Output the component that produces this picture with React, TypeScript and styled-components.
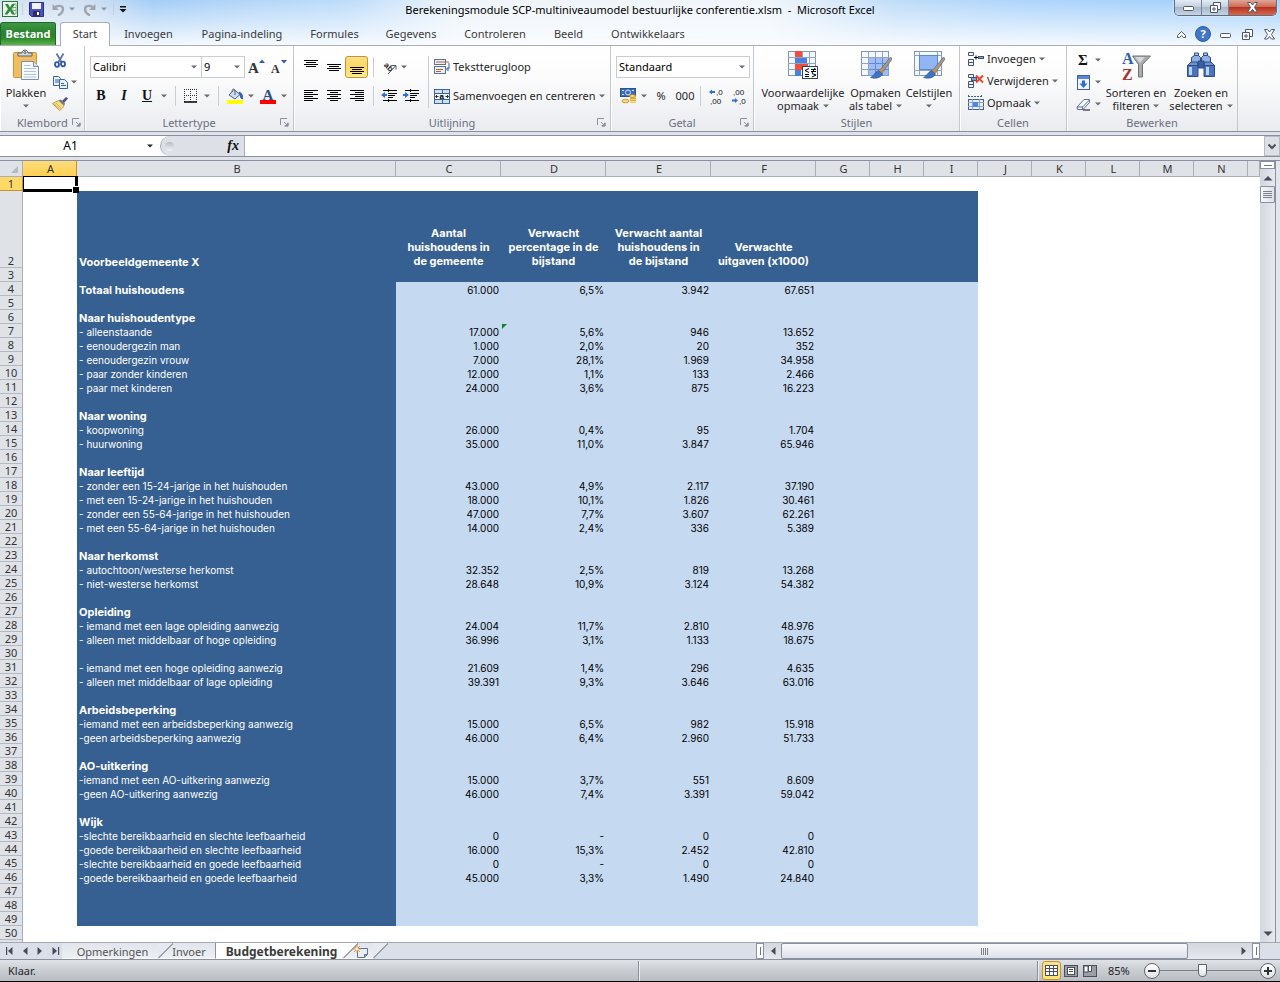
import React from "react";
import styled, { createGlobalStyle, css } from "styled-components";

const ui = `"Noto Sans", "Open Sans", sans-serif`;
const line = "#8b90a0";
const navy = "#366092";
const pale = "#c5d9f1";

const Global = createGlobalStyle`
  * { box-sizing: border-box; }
  body { margin: 0; background: #000; color: #262626; font: 11px/14px ${ui}; }
  button, input, select { font: inherit; color: inherit; margin: 0; }
  button { padding: 0; border: 0; background: none; display: flex; align-items: center; justify-content: center; }
  svg { display: block; flex: none; }
`;

const Window = styled.div`
  display: flex;
  flex-direction: column;
  height: 100vh;
  min-height: 400px;
  overflow: hidden;
  border-bottom: 1px solid #000;
  background: #dfe3e8;
`;

/* Title bar and ribbon tabs */
const Chrome = styled.header`
  flex: none;
  background:
    linear-gradient(to bottom, rgba(255, 255, 255, 0) 0%, rgba(250, 252, 255, 0.95) 100%),
    linear-gradient(to right, #d3e2f1 0%, #cfe0f2 7%, #a3cdf6 12%, #b4d6f8 20%, #bddcfa 27%, #eef4fa 36%, #f1f6fb 60%, #bfdcf8 70%, #aed5fb 80%, #a0cef9 100%);
`;
const TitleBar = styled.div`
  display: grid;
  grid-template-columns: 1fr auto 1fr;
  height: 22px;
`;
const QuickAccess = styled.div`
  display: flex;
  align-items: center;
  height: 18px;
`;
const Title = styled.h1`
  margin: 0;
  padding-top: 3px;
  font-size: 11px;
  font-weight: 400;
  line-height: 14px;
  color: #000;
  white-space: pre;
`;
const WindowButtons = styled.div`
  display: flex;
  justify-self: end;
  height: 16px;
  margin-right: 3px;
  border: 1px solid #5f6c7c;
  border-top: 0;
  border-radius: 0 0 5px 5px;
  overflow: hidden;
  box-shadow: 0 0 2px #fff;
`;
const WindowButton = styled.button<{ $w: number; $close?: boolean }>`
  width: ${(p) => p.$w}px;
  border-right: ${(p) => (p.$close ? 0 : "1px solid #75849a")};
  background: ${(p) =>
    p.$close
      ? "linear-gradient(#e0a597, #cf6a55 45%, #b63420 50%, #d6694f)"
      : "linear-gradient(#e4ecf5, #c3d0df 45%, #a9b9cb 50%, #c5d4e4)"};
`;
const TabBar = styled.nav`
  display: flex;
  align-items: flex-end;
  height: 24px;
  border-bottom: 1px solid #a9aeb7;
`;
const FileTab = styled.button`
  width: 56px;
  height: 23px;
  margin-right: 4px;
  border: 1px solid #1c6a2b;
  border-bottom: 0;
  border-radius: 3px 3px 0 0;
  background: linear-gradient(#3f9744, #28802f 50%, #2f8a2e 70%, #5cb546);
  color: #fff;
  font-weight: 700;
`;
const Tab = styled.button<{ $w: number; $active?: boolean }>`
  width: ${(p) => p.$w}px;
  height: 23px;
  color: #3b3b3b;
  ${(p) =>
    p.$active &&
    css`
      margin-bottom: -1px;
      height: 24px;
      padding-bottom: 2px;
      border: 1px solid #a9aeb7;
      border-bottom: 0;
      border-radius: 3px 3px 0 0;
      background: #fff;
    `}
`;
const TabTools = styled.div`
  display: flex;
  margin-left: auto;
`;

/* Ribbon */
const Ribbon = styled.section`
  display: flex;
  flex: none;
  height: 86px;
  border-bottom: 1px solid ${line};
  background: linear-gradient(#fff, #fbfbfc 40%, #e9ebef 100%);
`;
const GroupBox = styled.div<{ $w: number }>`
  display: flex;
  flex-direction: column;
  flex: none;
  width: ${(p) => p.$w}px;
  border-right: 1px solid #c3c7ce;
  box-shadow: inset 1px 0 0 #fff;
`;
const GroupBody = styled.div<{ $top: number; $left: number }>`
  display: flex;
  align-items: flex-start;
  height: 69px;
  padding: ${(p) => p.$top}px 0 0 ${(p) => p.$left}px;
`;
const GroupLabel = styled.div`
  display: grid;
  grid-template-columns: 17px 1fr 17px;
  align-items: center;
  height: 15px;
  text-align: center;
  color: #6a6f80;
  span { grid-column: 2; }
`;
const Stack = styled.div<{ $gap?: number }>`
  display: flex;
  flex-direction: column;
  gap: ${(p) => p.$gap ?? 0}px;
`;
const Row = styled.div`
  display: flex;
  align-items: center;
  height: 22px;
`;
const Tool = styled.button<{ $w: number; $on?: boolean }>`
  width: ${(p) => p.$w}px;
  height: 22px;
  ${(p) =>
    p.$on &&
    css`
      border: 1px solid #c29233;
      border-radius: 3px;
      background: linear-gradient(#fce08a, #ffd75e 50%, #ffee96);
    `}
`;
const LabelTool = styled.button`
  height: 22px;
  gap: 3px;
  white-space: nowrap;
  justify-content: flex-start;
`;
const Gap = styled.span<{ $w: number; $h?: number }>`
  width: ${(p) => p.$w}px;
  height: ${(p) => p.$h ?? 20}px;
  background: linear-gradient(#c9cdd6, #c9cdd6) center / 1px 100% no-repeat;
`;
const BigTool = styled.button<{ $w: number }>`
  flex-direction: column;
  justify-content: flex-start;
  width: ${(p) => p.$w}px;
  height: 64px;
  line-height: 13px;
  white-space: nowrap;
  svg:first-child { margin-bottom: 5px; }
  span { display: flex; align-items: center; gap: 4px; min-height: 13px; }
  span svg:first-child { margin-bottom: 0; }
`;
const Pick = styled.label<{ $w: number }>`
  position: relative;
  display: block;
  width: ${(p) => p.$w}px;
  height: 22px;
  border: 1px solid #c9ccd2;
  & + & { border-left: 0; }
  select {
    width: 100%;
    height: 20px;
    padding: 0 14px 0 2px;
    border: 0;
    background: #fff;
    color: #000;
    appearance: none;
  }
  svg { position: absolute; right: 4px; top: 8px; pointer-events: none; }
`;
const Glyph = styled.span<{ $size: number; $bold?: boolean; $italic?: boolean; $under?: boolean }>`
  font-family: "Liberation Serif", serif;
  font-size: ${(p) => p.$size}px;
  font-weight: ${(p) => (p.$bold ? 700 : 400)};
  font-style: ${(p) => (p.$italic ? "italic" : "normal")};
  text-decoration: ${(p) => (p.$under ? "underline" : "none")};
  color: #111;
`;

/* Formula bar */
const FormulaBar = styled.section`
  display: flex;
  flex: none;
  height: 22px;
  margin: 3px 0;
  border: 1px solid ${line};
  border-width: 1px 0;
  background: #fff;
`;
const NameBox = styled.label`
  display: flex;
  align-items: center;
  width: 160px;
  padding-right: 7px;
  input { flex: 1; min-width: 0; padding: 0 6px 0 0; border: 0; text-align: center; font-size: 12px; color: #000; background: none; }
`;
const FxBox = styled.div`
  display: flex;
  align-items: center;
  justify-content: space-between;
  width: 85px;
  padding: 0 5px 0 4px;
  border: 1px solid #a7acb6;
  border-width: 0 1px;
  border-radius: 11px 0 0 11px;
  background: #dde0e6;
`;
const Dot = styled.span`
  width: 9px;
  height: 9px;
  border-radius: 50%;
  background: linear-gradient(#b7bbc2, #f4f5f7);
`;
const FormulaInput = styled.input`
  flex: 1;
  min-width: 0;
  border: 0;
`;
const Expand = styled.button`
  width: 16px;
  border: 1px solid #b7bbc4;
  background: #dde0e6;
`;

/* Sheet */
const SheetArea = styled.main`
  display: flex;
  flex: 1;
  min-height: 0;
  border-top: 1px solid ${line};
`;
const GridPane = styled.div`
  flex: 1;
  min-width: 0;
  overflow: hidden;
  background: #fff;
`;
const Grid = styled.table`
  width: 100%;
  table-layout: fixed;
  border-collapse: separate;
  border-spacing: 0;
  line-height: 12px;
  th, td { padding: 0; height: 14px; }
`;
const ColHead = styled.th<{ $on?: boolean }>`
  && { height: 16px; padding: 1px 0 0 2px; }
  border-right: 1px solid ${(p) => (p.$on ? "#c29233" : "#a9aeb7")};
  border-bottom: 1px solid ${(p) => (p.$on ? "#c29233" : "#a9aeb7")};
  background: ${(p) => (p.$on ? "linear-gradient(#fddc7a, #ffd052)" : "#dfe2e7")};
  font-weight: 400;
  color: #333;
`;
const RowHead = styled.th<{ $on?: boolean }>`
  && { padding-top: 1px; }
  border-right: 1px solid ${(p) => (p.$on ? "#c29233" : "#a9aeb7")};
  border-bottom: 1px solid ${(p) => (p.$on ? "#c29233" : "#b4b8c0")};
  background: ${(p) => (p.$on ? "#ffd967" : "#dfe2e7")};
  font-weight: 400;
  color: #333;
  vertical-align: bottom;
`;
const SizedRow = styled.tr<{ $h: number }>`
  && > * { height: ${(p) => p.$h}px; }
`;
const Cell = styled.td<{ $fill?: string }>`
  background: ${(p) => p.$fill ?? "#fff"};
`;
const Label = styled.td<{ $bold?: boolean }>`
  && { padding: 2px 0 0 2px; }
  background: ${navy};
  color: #fff;
  font-family: Inter, sans-serif;
  font-size: ${(p) => (p.$bold ? 11 : 10)}px;
  font-weight: ${(p) => (p.$bold ? 700 : 400)};
  vertical-align: bottom;
  white-space: nowrap;
`;
const Heading = styled(Label)`
  && { padding: 0; }
  line-height: 14px;
  text-align: center;
`;
const Num = styled.td`
  && { padding: 2px 2px 0 0; }
  position: relative;
  background: ${pale};
  color: #000;
  font-family: Inter, sans-serif;
  font-size: 10px;
  text-align: right;
`;
const ErrorMark = styled.span`
  position: absolute;
  left: 1px;
  top: 0;
  border-top: 5px solid #0a8a1e;
  border-right: 5px solid transparent;
`;
const ActiveCell = styled.td`
  position: relative;
  z-index: 1;
  &::before {
    content: "";
    position: absolute;
    inset: -1px -1px -1px 0;
    border: 1px solid #000;
    border-width: 1px 3px 3px 1px;
  }
  &::after {
    content: "";
    position: absolute;
    right: -2px;
    bottom: -2px;
    width: 6px;
    height: 6px;
    border: 1px solid #fff;
    border-width: 1px 0 0 1px;
    background: #000;
  }
`;
const VScroll = styled.div`
  display: flex;
  flex-direction: column;
  width: 16px;
  background: linear-gradient(to right, #d3d7de, #e6e9ee);
  border-right: 1px solid ${line};
`;
const SplitBox = styled.span<{ $v?: boolean }>`
  flex: none;
  display: block;
  width: ${(p) => (p.$v ? 8 : 15)}px;
  height: ${(p) => (p.$v ? 16 : 8)}px;
  border: 1px solid ${line};
  background: ${(p) =>
    p.$v
      ? "linear-gradient(#6f7585, #6f7585) center / 1px 8px no-repeat #fff"
      : "linear-gradient(#6f7585, #6f7585) center / 8px 1px no-repeat #fff"};
`;
const ScrollArrow = styled.button<{ $v?: boolean }>`
  flex: none;
  width: ${(p) => (p.$v ? 15 : 17)}px;
  height: ${(p) => (p.$v ? 17 : 16)}px;
`;
const VThumb = styled.div`
  display: flex;
  align-items: center;
  justify-content: center;
  height: 17px;
  border: 1px solid #8b90a0;
  border-radius: 1px;
  background: linear-gradient(to right, #f7f8fa, #dde1e7);
`;
const Spacer = styled.div`
  flex: 1;
`;
const Frame = styled.div`
  width: 4px;
  background: #e3e7ed;
`;

/* Sheet tabs */
const SheetBar = styled.nav`
  display: flex;
  flex: none;
  height: 17px;
  border-top: 1px solid #a3a8b3;
  background: #dbe0e8;
`;
const SheetNav = styled.div`
  display: flex;
  width: 62px;
  padding-left: 2px;
`;
const SheetNavButton = styled.button`
  width: 15px;
`;
const SheetTab = styled.button<{ $w: number; $z: number; $on?: boolean }>`
  position: relative;
  width: ${(p) => p.$w}px;
  height: 16px;
  padding: 2px 0 0 4px;
  z-index: ${(p) => p.$z};
  border-left: 1px solid ${(p) => (p.$on ? line : "transparent")};
  background: ${(p) => (p.$on ? "#fff" : "linear-gradient(#e2e6ec, #eceff3)")};
  color: ${(p) => (p.$on ? "#3b3b3b" : "#555")};
  font-size: ${(p) => (p.$on ? 12 : 11)}px;
  font-weight: ${(p) => (p.$on ? 700 : 400)};
  border-bottom: 1px solid #fff;
  &::after {
    content: "";
    position: absolute;
    left: 100%;
    top: 0;
    width: 15px;
    height: 15px;
    background: linear-gradient(135deg, ${(p) => (p.$on ? "#fff" : "#e6e9ee")} 47%, #9a9fac 47% 54%, transparent 54%);
  }
`;
const HScroll = styled.div`
  display: flex;
  width: calc(40% - 8px);
  background: linear-gradient(#d3d7de, #e6e9ee);
`;
const HThumb = styled.div`
  display: flex;
  align-items: center;
  justify-content: center;
  flex: 1;
  margin-right: 47px;
  border: 1px solid #8b90a0;
  border-radius: 2px;
  background: linear-gradient(#f7f9fb, #dde1e7);
`;

/* Status bar */
const StatusBar = styled.footer`
  display: flex;
  align-items: center;
  flex: none;
  height: 22px;
  border-top: 1px solid ${line};
  background: linear-gradient(#dfe2e6, #cdd0d5 40%, #b9bcc2);
`;
const StatusText = styled.span`
  flex: 0 0 calc(50% - 2px);
  padding-left: 8px;
`;
const StatusTail = styled.div`
  display: flex;
  align-items: center;
  flex: 1;
  height: 20px;
  border-left: 1px solid #8b90a0;
  box-shadow: inset 1px 0 0 #eceef1;
`;
const ViewTools = styled.div`
  display: flex;
  align-items: center;
  margin-left: auto;
  height: 20px;
  padding-left: 4px;
  border-left: 1px solid #8b90a0;
  box-shadow: inset 1px 0 0 #eceef1;
`;
const ViewButton = styled.button<{ $on?: boolean }>`
  width: 19px;
  height: 19px;
  ${(p) =>
    p.$on &&
    css`
      border: 1px solid #c29233;
      border-radius: 3px;
      background: linear-gradient(#fce08a, #ffe777);
    `}
`;
const Percent = styled.span`
  width: 45px;
  padding-left: 9px;
`;
const Round = styled.button`
  width: 16px;
  height: 16px;
  border: 1px solid #5f6470;
  border-radius: 50%;
  background: linear-gradient(#fff, #dfe1e5);
`;
const Zoom = styled.input`
  width: 100px;
  height: 16px;
  margin: 0;
  appearance: none;
  background: linear-gradient(#7b808b, #7b808b) center / 100% 1px no-repeat;
  &::-webkit-slider-thumb {
    appearance: none;
    width: 9px;
    height: 13px;
    border: 1px solid #5f6470;
    border-radius: 1px 1px 5px 5px;
    background: linear-gradient(#fff, #e3e5e9);
  }
`;

/* Icons */
const Caret = ({ color = "#6b6b6b" }: { color?: string }) => (
  <svg width="6" height="4" viewBox="0 0 6 4"><path d="M0 0.5h6L3 3.5z" fill={color} /></svg>
);
const Launcher = () => (
  <svg width="9" height="9" viewBox="0 0 9 9" fill="none" stroke="#8b90a0">
    <path d="M0.5 7V0.5H7M4 4l3 3M8 4.500V8H4.500" /><path d="M8 5v3H5z" fill="#8b90a0" />
  </svg>
);
const Lines = ({ rows }: { rows: [number, number, number][] }) => (
  <svg width="14" height="16" viewBox="0 0 14 16" stroke="#000">
    {rows.map(([y, a, b]) => <path key={y} d={`M${a} ${y + 0.5}H${b}`} />)}
  </svg>
);
const ExcelIcon = () => (
  <svg width="17" height="17" viewBox="0 0 17 17">
    <rect x="0.500" y="0.500" width="15" height="15" fill="#eef7ec" stroke="#237a35" />
    <path d="M11 3h3v10h-3zM11 6.500h3M11 9.500h3" fill="#fff" stroke="#5a9c5e" strokeWidth="0.800" />
    <path d="M3 3h3l2 3.500L10 3h3L9.500 8l3.500 5.500h-3L8 10l-2.500 3.500h-3L6 8z" fill="#2b8a3b" />
  </svg>
);
const SaveIcon = () => (
  <svg width="15" height="15" viewBox="0 0 15 15">
    <path d="M0.500 0.500h14v14h-12l-2-2z" fill="#4a50bd" stroke="#2b2f86" />
    <rect x="3" y="1" width="9" height="6" fill="#f0f4ff" /><rect x="4" y="9" width="7" height="5" fill="#2b2f5e" /><rect x="8" y="10" width="2" height="3" fill="#fff" />
  </svg>
);
const UndoIcon = ({ flip }: { flip?: boolean }) => (
  <svg width="13" height="13" viewBox="0 0 13 13">
    <g transform={flip ? "translate(13 0) scale(-1 1)" : undefined} fill="none" stroke="#a0a5ad" strokeWidth="2.400">
      <path d="M2 5c3-3 9-3 9 1 0 3-2 5-5 6.500" /><path d="M0.500 1v6h6.500z" fill="#a0a5ad" stroke="none" />
    </g>
  </svg>
);
const CustomizeIcon = () => (
  <svg width="8" height="7" viewBox="0 0 8 7"><path d="M1 0h6v1.500H1zM0.500 3h7L4 6.500z" fill="#111" /></svg>
);
const PasteIcon = () => (
  <svg width="28" height="32" viewBox="0 0 28 32">
    <rect x="1.500" y="3.500" width="23" height="25" rx="1" fill="#f0bd5f" stroke="#cf9437" />
    <path d="M6 7V4h4c0-4 6-4 6 0h4v3z" fill="#d6dade" stroke="#596069" /><circle cx="13" cy="3.500" r="1" fill="#fff" stroke="#596069" />
    <path d="M9.500 12.500h12l5 5v13h-17z" fill="#f6f9fd" stroke="#7d8fa8" /><path d="M21.500 12.500v5h5" fill="#d9e3ef" stroke="#7d8fa8" />
    <path d="M12 16.500h7M12 19.500h12M12 22.500h12M12 25.500h12M12 28h12" stroke="#b4c2d6" />
  </svg>
);
const CutIcon = () => (
  <svg width="12" height="15" viewBox="0 0 12 15" fill="none">
    <path d="M2.500 0.500L7.500 9M9.500 0.500L4.500 9" stroke="#62779a" strokeWidth="1.800" />
    <ellipse cx="3" cy="11.500" rx="2" ry="2.300" stroke="#2a56b5" strokeWidth="1.800" /><ellipse cx="9" cy="11" rx="2" ry="2.300" stroke="#2a56b5" strokeWidth="1.800" />
  </svg>
);
const CopyIcon = () => (
  <svg width="15" height="13" viewBox="0 0 15 13" fill="#eaf2fd" stroke="#3462ae">
    <path d="M0.500 0.500h5l2 2v7h-7z" /><path d="M2 4h4M2 6h4" /><path d="M6.500 3.500h5l3 3v6h-8z" /><path d="M8 7.500h3M8 9.500h5" />
  </svg>
);
const BrushIcon = () => (
  <svg width="16" height="14" viewBox="0 0 16 14">
    <path d="M14 0l2 1.500-4 4.500-2-2z" fill="#51499c" /><path d="M6.500 3.500l2.500-1 4 4-1 2.500z" fill="#6f7684" />
    <path d="M6.500 3.500L0.500 6.500l7 7c2-1 3.500-3 4.500-5z" fill="#f5dd83" stroke="#b28d36" strokeWidth="0.800" /><path d="M4 6l5 5M2.500 7.500l5 4" stroke="#c9a24a" strokeWidth="0.700" />
  </svg>
);
const GrowFont = ({ down }: { down?: boolean }) => (
  <svg width="18" height="20" viewBox="0 0 18 20">
    <text x="0" y="16" fontFamily="Liberation Serif" fontWeight="700" fontSize={down ? 12 : 15} fill="#333">A</text>
    <path d={down ? "M10 3h6l-3 3.500z" : "M11 6h6l-3-3.500z"} fill="#2f5cae" />
  </svg>
);
const BorderIcon = () => (
  <svg width="14" height="14" viewBox="0 0 14 14" fill="none" stroke="#333">
    <path d="M0.500 0v13M6.500 0v13M12.500 0v13M0 0.500h13M0 6.500h13" strokeDasharray="1 1" /><path d="M0 13h13" strokeWidth="1.500" stroke="#000" />
  </svg>
);
const FillIcon = () => (
  <svg width="16" height="16" viewBox="0 0 16 16">
    <path d="M7 1.500l6 5-5 4.500-6-4z" fill="#cfdcec" stroke="#4c6285" /><path d="M5 4c0-4 3-4 3 0v3" fill="none" stroke="#4c6285" /><path d="M12 4c3 1 4 4 3.500 7-2 0-2-3-2.500-4.500z" fill="#2c62b5" stroke="#2c62b5" />
    <rect y="12" width="16" height="4" fill="#ff0" />
  </svg>
);
const FontColorIcon = () => (
  <svg width="16" height="20" viewBox="0 0 16 20">
    <text x="2.500" y="13.500" fontFamily="Liberation Serif" fontWeight="700" fontSize="15" fill="#2b4f92">A</text><rect y="14" width="16" height="4" fill="#f00" />
  </svg>
);
const OrientIcon = () => (
  <svg width="16" height="16" viewBox="0 0 16 16">
    <text x="0" y="0" transform="translate(2.500 6.500) rotate(45)" fontFamily="Liberation Sans" fontWeight="700" fontSize="8" fill="#222">ab</text>
    <path d="M7 15l7.500-8M11 6.500h4v4" stroke="#555" fill="none" />
  </svg>
);
const IndentIcon = ({ out }: { out?: boolean }) => (
  <svg width="16" height="16" viewBox="0 0 16 16" stroke="#000">
    <path d="M2 2.500h14M7 5.500h9M7 7.500h7M7 9.500h5M2 12.500h14" /><path d="M7.500 1v14" strokeDasharray="1 1" />
    <path d={out ? "M0 7l4-3v2h2v2h-2v2z" : "M6 7L2 4v2H0v2h2v2z"} fill="#2f6fd0" stroke="none" />
  </svg>
);
const WrapIcon = () => (
  <svg width="16" height="16" viewBox="0 0 16 16" fill="#e9f0f9" stroke="#5b7394">
    <rect x="0.500" y="0.500" width="11" height="5" /><rect x="0.500" y="7.500" width="11" height="7" /><path d="M2 3h13" stroke="#b7622d" /><path d="M2 10.500h7M2 12.500h5" stroke="#b7622d" />
    <path d="M15 4v6h-2M14.500 8l-2 2 2 2" stroke="#3462ae" fill="none" />
  </svg>
);
const MergeIcon = () => (
  <svg width="16" height="15" viewBox="0 0 16 15" stroke="#3f6393">
    <rect x="0.500" y="0.500" width="15" height="14" fill="#cfe0f5" /><path d="M0 4.500h16M0 10.500h16M8.500 0v4M8.500 11v4" /><rect x="1" y="5" width="14" height="5" fill="#eef4fb" stroke="none" />
    <path d="M1.500 7.500h3M11.500 7.500h3M3 6l-1.500 1.500L3 9M13 6l1.500 1.500L13 9" stroke="#333" fill="none" /><text x="5.500" y="10" fontFamily="Liberation Sans" fontWeight="700" fontSize="8" fill="#000" stroke="none">a</text>
  </svg>
);
const MoneyIcon = () => (
  <svg width="17" height="16" viewBox="0 0 17 16">
    <rect x="0.500" y="0.500" width="15" height="8" fill="#3c6cb8" stroke="#28529a" /><circle cx="8" cy="4.500" r="2.500" fill="none" stroke="#d9e6f8" /><path d="M2 2.500h2M12 2.500h2M2 6.500h2" stroke="#d9e6f8" />
    <path d="M10 8h6v6.500h-6z" fill="#e0a22b" /><path d="M10 9.500h6M10 11.500h6M10 13.500h6" stroke="#ffdf86" />
    <ellipse cx="12.500" cy="8" rx="3" ry="1.500" fill="#ffd76a" stroke="#b57b14" strokeWidth="0.700" />
    <ellipse cx="5.500" cy="13" rx="3.500" ry="1.800" fill="#ffd76a" stroke="#b57b14" strokeWidth="0.700" />
  </svg>
);
const DecimalIcon = ({ less }: { less?: boolean }) => (
  <svg width="18" height="20" viewBox="0 0 18 20" fontFamily="Liberation Sans" fontSize="8" fill="#111">
    <text x={less ? 3 : 9} y="9">{less ? ",00" : ",0"}</text><text x={less ? 9 : 3} y="18">{less ? ",0" : ",00"}</text>
    <path d={less ? "M8 14.500L5 12v1.500H2v2h3V17z" : "M2 6l3-2.500V5h3v2H5v1.500z"} fill="#2f6fd0" />
  </svg>
);
const TableArt = () => (
  <g><rect x="0.500" y="0.500" width="27" height="24" fill="#f4f8fd" stroke="#8196b4" /><path d="M0 6.500h28M0 12.500h28M0 18.500h28M7.500 0v25M14.500 0v25M21.500 0v25" stroke="#8fa5c4" /></g>
);
const Paint = () => (
  <g><path d="M29.500 6l1.500 2-9 13-3-2z" fill="#a39a8e" stroke="#6a6258" strokeWidth="0.700" /><path d="M19 18l4 3-2 2-3.500-3z" fill="#d58a3b" /><path d="M17.500 19.500l4 3.500c-2 4-7 5-12 3.500 3-1 4-5 8-7z" fill="#3f73c4" stroke="#2b549c" strokeWidth="0.700" /></g>
);
const CondIcon = () => (
  <svg width="32" height="32" viewBox="0 0 32 32"><g transform="translate(1 2)">
    <TableArt /><path d="M7 0h7v6H7zM7 13h13v6H7z" fill="#ef4f3a" /><path d="M7 7h12v5H7zM7 19h6v6H7z" fill="#4d7fe0" />
    <rect x="14.500" y="15.500" width="15" height="12" fill="#f3f6fb" stroke="#33435c" /><path d="M21 17.500l-4 2 4 2M17 23.500h4M17 25.500h4M23 18.500h5M23 20.500h5M27 17l-3 5M24 22.500l4 1.500-4 2" stroke="#000" fill="none" /></g>
  </svg>
);
const FormatTableIcon = () => (
  <svg width="32" height="32" viewBox="0 0 32 32"><g transform="translate(1 2)"><TableArt /><path d="M8 7h20v18H8z" fill="#7da4ec" opacity="0.700" /><path d="M8 12.500h20M8 18.500h20M14.500 7v18M21.500 7v18" stroke="#6389cf" /><Paint /></g></svg>
);
const CellStyleIcon = () => (
  <svg width="32" height="32" viewBox="0 0 32 32"><g transform="translate(1 2)"><rect x="0.500" y="0.500" width="27" height="24" fill="#f4f8fd" stroke="#8196b4" /><path d="M0 4.500h28M0 19.500h28M5.500 0v25M23.500 0v25" stroke="#8fa5c4" /><rect x="5.500" y="4.500" width="18" height="14" fill="#92b5f3" stroke="#5c86cf" /><Paint /></g></svg>
);
const CellsIcon = ({ kind }: { kind: "add" | "del" | "fmt" }) =>
  kind === "fmt" ? (
    <svg width="16" height="16" viewBox="0 0 16 16" fill="none" stroke="#3f5f94"><path d="M0 1.500h14M0.500 0v3M13.500 0v3" strokeDasharray="2 1" /><rect x="0.500" y="4.500" width="15" height="10" fill="#eaf1fb" /><path d="M0 7.500h16M0 11.500h16M4.500 4v11M11.500 4v11" stroke="#8aa3cb" /><rect x="5" y="7" width="5" height="5" fill="#4d86e8" stroke="none" /></svg>
  ) : (
    <svg width="16" height="15" viewBox="0 0 16 15" fill="#eaf1fb" stroke="#44546f">
      <path d="M0.500 0.500h5v3h-5zM0.500 7.500h5v3h-5zM0.500 10.500h5v3h-5z" />
      {kind === "add" ? <><path d="M6 5.500h4M8 3.500v4" stroke="#000" /><rect x="10.500" y="4.500" width="5" height="2" fill="#6fa0ee" /></> : <><rect x="3.500" y="3.500" width="5" height="3" fill="#6fa0ee" /><path d="M8 1.500l7 7M15 1.500l-7 7" stroke="#e8452c" strokeWidth="2" /></>}
    </svg>
  );
const FillDownIcon = () => (
  <svg width="13" height="15" viewBox="0 0 13 15"><rect x="0.500" y="0.500" width="12" height="14" fill="#f2f6fc" stroke="#3c62a5" /><rect x="1" y="1" width="11" height="3" fill="#5a86d2" /><path d="M5 5.500h3v3h2.500L6.500 13l-4-4.500H5z" fill="#2f6ad0" /></svg>
);
const EraserIcon = () => (
  <svg width="15" height="13" viewBox="0 0 15 13"><path d="M8 1.500h5.500v3L7 11.500H1.500L1 9z" fill="#f4f7fb" stroke="#5c7190" /><path d="M1 9h5.500l7-7M6.500 9v2.500" fill="none" stroke="#5c7190" /><path d="M7 12h7" stroke="#000" /></svg>
);
const SortIcon = () => (
  <svg width="32" height="36" viewBox="0 0 32 36">
    <text x="2" y="15" fontFamily="Liberation Serif" fontWeight="700" fontSize="16" fill="#2f5cae">A</text><text x="2" y="31" fontFamily="Liberation Serif" fontWeight="700" fontSize="16" fill="#a5332f">Z</text>
    <path d="M12.500 7h18l-8 8.500V28h-4V15.500z" fill="#a9acb0" stroke="#6e7277" /><path d="M15 8h10l-5 6z" fill="#d5d7d9" />
  </svg>
);
const FindIcon = () => (
  <svg width="30" height="32" viewBox="0 0 30 32" fill="#6d93d3" stroke="#2c4d88">
    <path d="M8.500 4h4v3h-4zM17.500 4h4v3h-4z" fill="#b6cdf2" /><path d="M5.500 8.500l3-2h4l2 2v7h-9zM15.500 8.500l2-2h4l3 2v7h-9z" fill="#8fb0e6" /><path d="M12 12h6v7h-6z" fill="#3c5f9e" />
    <path d="M1.500 16.500h10.500v11H1.500zM18 16.500h10.500v11H18z" fill="#4b74bd" /><path d="M3 18h3v8H3zM20 18h3v8h-3z" fill="#bed3f5" stroke="none" /><path d="M1.500 16.500L5 13h6l1 3.500zM18 16.500l1-3.500h6l3.500 3.500z" />
  </svg>
);
const Tri = ({ dir, bar }: { dir: "l" | "r" | "u" | "d"; bar?: boolean }) => (
  <svg width="10" height="10" viewBox="0 0 10 10" fill="#454b5a">
    <path d={{ l: "M7.500 1v8l-4.500-4z", r: "M2.500 1v8l4.500-4z", u: "M0.500 7.500h9L5 3z", d: "M0.500 2.500h9L5 7z" }[dir]} />
    {bar && <path d={dir === "l" ? "M1 1h1.200v8H1z" : "M8 1h1.200v8H8z"} />}
  </svg>
);
const Grip = ({ up }: { up?: boolean }) => (
  <svg width="9" height="9" viewBox="0 0 9 9" stroke="#7b808b"><path d={up ? "M0 1.500h9M0 3.500h9M0 5.500h9M0 7.500h9" : "M1.500 1v7M3.500 1v7M5.500 1v7M7.500 1v7"} /></svg>
);
const WinGlyph = ({ kind, s = 13 }: { kind: "min" | "max" | "close"; s?: number }) => (
  <svg width={s} height={s} viewBox="0 0 13 13" fill="#fff" stroke="#4e5768">
    {kind === "min" && <rect x="1.500" y="5.500" width="10" height="4" rx="1" />}
    {kind === "max" && <><path d="M4.500 1.500h7v7h-7z" /><path d="M1.500 4.500h7v7h-7z" /><path d="M4 7h2v2H4z" /></>}
    {kind === "close" && <path d="M1.500 1.500h3l2 2.500 2-2.500h3L8.500 6.500l3 4.500h-3l-2-2.500-2 2.500h-3l3-4.500z" />}
  </svg>
);
const HelpIcon = () => (
  <svg width="16" height="16" viewBox="0 0 16 16"><circle cx="8" cy="8" r="7.500" fill="#3f76c8" stroke="#2b5aa6" /><text x="8" y="12" textAnchor="middle" fontFamily="Noto Sans" fontWeight="700" fontSize="11" fill="#fff">?</text></svg>
);

const Group = ({ name, w, top = 10, left = 5, launcher, children }: { name: string; w: number; top?: number; left?: number; launcher?: boolean; children: React.ReactNode }) => (
  <GroupBox $w={w} role="group" aria-label={name}>
    <GroupBody $top={top} $left={left}>{children}</GroupBody>
    <GroupLabel><span>{name}</span>{launcher && <button aria-label={`${name} opties`}><Launcher /></button>}</GroupLabel>
  </GroupBox>
);

type Line = [string, string?, string?, string?, string?];
const rows: Record<number, Line> = {
  4: ["Totaal huishoudens", "61.000", "6,5%", "3.942", "67.651"],
  6: ["Naar huishoudentype"],
  7: ["- alleenstaande", "17.000", "5,6%", "946", "13.652"],
  8: ["- eenoudergezin man", "1.000", "2,0%", "20", "352"],
  9: ["- eenoudergezin vrouw", "7.000", "28,1%", "1.969", "34.958"],
  10: ["- paar zonder kinderen", "12.000", "1,1%", "133", "2.466"],
  11: ["- paar met kinderen", "24.000", "3,6%", "875", "16.223"],
  13: ["Naar woning"],
  14: ["- koopwoning", "26.000", "0,4%", "95", "1.704"],
  15: ["- huurwoning", "35.000", "11,0%", "3.847", "65.946"],
  17: ["Naar leeftijd"],
  18: ["- zonder een 15-24-jarige in het huishouden", "43.000", "4,9%", "2.117", "37.190"],
  19: ["- met een 15-24-jarige in het huishouden", "18.000", "10,1%", "1.826", "30.461"],
  20: ["- zonder een 55-64-jarige in het huishouden", "47.000", "7,7%", "3.607", "62.261"],
  21: ["- met een 55-64-jarige in het huishouden", "14.000", "2,4%", "336", "5.389"],
  23: ["Naar herkomst"],
  24: ["- autochtoon/westerse herkomst", "32.352", "2,5%", "819", "13.268"],
  25: ["- niet-westerse herkomst", "28.648", "10,9%", "3.124", "54.382"],
  27: ["Opleiding"],
  28: ["- iemand met een lage opleiding aanwezig", "24.004", "11,7%", "2.810", "48.976"],
  29: ["- alleen met middelbaar of hoge opleiding", "36.996", "3,1%", "1.133", "18.675"],
  31: ["- iemand met een hoge opleiding aanwezig", "21.609", "1,4%", "296", "4.635"],
  32: ["- alleen met middelbaar of lage opleiding", "39.391", "9,3%", "3.646", "63.016"],
  34: ["Arbeidsbeperking"],
  35: ["-iemand met een arbeidsbeperking aanwezig", "15.000", "6,5%", "982", "15.918"],
  36: ["-geen arbeidsbeperking aanwezig", "46.000", "6,4%", "2.960", "51.733"],
  38: ["AO-uitkering"],
  39: ["-iemand met een AO-uitkering aanwezig", "15.000", "3,7%", "551", "8.609"],
  40: ["-geen AO-uitkering aanwezig", "46.000", "7,4%", "3.391", "59.042"],
  42: ["Wijk"],
  43: ["-slechte bereikbaarheid en slechte leefbaarheid", "0", "-", "0", "0"],
  44: ["-goede bereikbaarheid en slechte leefbaarheid", "16.000", "15,3%", "2.452", "42.810"],
  45: ["-slechte bereikbaarheid en goede leefbaarheid", "0", "-", "0", "0"],
  46: ["-goede bereikbaarheid en goede leefbaarheid", "45.000", "3,3%", "1.490", "24.840"],
};
const headings = [
  ["Aantal", "huishoudens in", "de gemeente"],
  ["Verwacht", "percentage in de", "bijstand"],
  ["Verwacht aantal", "huishoudens in", "de bijstand"],
  ["Verwachte", "uitgaven (x1000)"],
];
const columns = "ABCDEFGHIJKLMN".split("");
const widths = [23, 54, 319, 105, 105, 105, 105, 54, 54, 54, 54, 54, 54, 54, 54];
const blanks = (n: number, fill?: string) => Array.from({ length: n }, (_, i) => <Cell key={i} $fill={fill} />);
const dataRows = Array.from({ length: 46 }, (_, i) => i + 4);

const Sheet = () => (
  <Grid>
    <colgroup>{widths.map((w, i) => <col key={i} width={w} />)}<col /></colgroup>
    <thead>
      <tr>
        <ColHead><svg width="20" height="14" viewBox="0 0 20 14"><path d="M16 4v7H9z" fill="#b4b9c3" /></svg></ColHead>
        {columns.map((c) => <ColHead key={c} scope="col" $on={c === "A"}>{c}</ColHead>)}
        <ColHead />
      </tr>
    </thead>
    <tbody>
      <tr><RowHead scope="row" $on>1</RowHead><ActiveCell />{blanks(14)}</tr>
      <SizedRow $h={77}>
        <RowHead scope="row">2</RowHead><Cell /><Label $bold>Voorbeeldgemeente X</Label>
        {headings.map((h, i) => <Heading key={i} $bold>{h.map((t, j) => <div key={j}>{t}</div>)}</Heading>)}
        {blanks(3, navy)}{blanks(6)}
      </SizedRow>
      <SizedRow $h={13}><RowHead scope="row">3</RowHead><Cell />{blanks(8, navy)}{blanks(6)}</SizedRow>
      {dataRows.map((n) => {
        const [label, ...values] = rows[n] ?? [""];
        return (
          <tr key={n}>
            <RowHead scope="row">{n}</RowHead><Cell />
            <Label $bold={!!label && !label.startsWith("-")}>{label}</Label>
            {[0, 1, 2, 3].map((i) => <Num key={i}>{n === 7 && i === 1 && <ErrorMark />}{values[i]}</Num>)}
            {blanks(3, pale)}{blanks(6)}
          </tr>
        );
      })}
      <tr><RowHead scope="row">50</RowHead>{blanks(15)}</tr>
      <tr><RowHead />{blanks(15)}</tr>
    </tbody>
  </Grid>
);

export default function App() {
  return (
    <Window>
      <Global />
      <Chrome>
        <TitleBar>
          <QuickAccess>
            <Gap $w={2} $h={0} /><ExcelIcon /><Gap $w={6} $h={12} /><Gap $w={4} $h={0} />
            <Tool $w={15} aria-label="Opslaan"><SaveIcon /></Tool><Gap $w={8} $h={0} />
            <Tool $w={13} aria-label="Ongedaan maken"><UndoIcon /></Tool><Gap $w={4} $h={0} /><Caret color="#8d9299" /><Gap $w={8} $h={0} />
            <Tool $w={13} aria-label="Opnieuw"><UndoIcon flip /></Tool><Gap $w={5} $h={0} /><Caret color="#8d9299" /><Gap $w={12} $h={12} />
            <Tool $w={8} aria-label="Werkbalk aanpassen"><CustomizeIcon /></Tool>
          </QuickAccess>
          <Title>{"Berekeningsmodule SCP-multiniveaumodel bestuurlijke conferentie.xlsm  -  Microsoft Excel"}</Title>
          <WindowButtons>
            <WindowButton $w={27} aria-label="Minimaliseren"><WinGlyph kind="min" /></WindowButton>
            <WindowButton $w={27} aria-label="Verkleinen"><WinGlyph kind="max" /></WindowButton>
            <WindowButton $w={47} $close aria-label="Sluiten"><WinGlyph kind="close" /></WindowButton>
          </WindowButtons>
        </TitleBar>
        <TabBar>
          <FileTab>Bestand</FileTab>
          <Tab $w={50} $active>Start</Tab>
          <Tab $w={77}>Invoegen</Tab>
          <Tab $w={110}>Pagina-indeling</Tab>
          <Tab $w={75}>Formules</Tab>
          <Tab $w={78}>Gegevens</Tab>
          <Tab $w={90}>Controleren</Tab>
          <Tab $w={57}>Beeld</Tab>
          <Tab $w={102}>Ontwikkelaars</Tab>
          <TabTools>
            <Tool $w={22} aria-label="Lint minimaliseren"><svg width="9" height="7" viewBox="0 0 9 7" fill="#fff" stroke="#4e5768"><path d="M0.500 4.500l4-4 4 4v2h-2l-2-2-2 2h-2z" /></svg></Tool>
            <Tool $w={22} aria-label="Help"><HelpIcon /></Tool>
            <Tool $w={22} aria-label="Venster minimaliseren"><WinGlyph kind="min" /></Tool>
            <Tool $w={22} aria-label="Venster verkleinen"><WinGlyph kind="max" /></Tool>
            <Tool $w={22} aria-label="Venster sluiten"><WinGlyph kind="close" /></Tool>
          </TabTools>
        </TabBar>
      </Chrome>

      <Ribbon>
        <Group name="Klembord" w={85} top={3} left={0} launcher>
          <BigTool $w={52}><PasteIcon /><span>Plakken</span><span><Caret /></span></BigTool>
          <Stack>
            <Row><Tool $w={16} aria-label="Knippen"><CutIcon /></Tool></Row>
            <Row><Tool $w={16} aria-label="Kopiëren"><CopyIcon /></Tool><Tool $w={12} aria-label="Kopieeropties"><Caret /></Tool></Row>
            <Row><Tool $w={16} aria-label="Opmaak kopiëren"><BrushIcon /></Tool></Row>
          </Stack>
        </Group>
        <Group name="Lettertype" w={209} launcher>
          <Stack $gap={7}>
            <Row>
              <Pick $w={112}><select aria-label="Lettertype"><option>Calibri</option></select><Caret /></Pick>
              <Pick $w={43}><select aria-label="Tekengrootte"><option>9</option></select><Caret /></Pick>
              <Tool $w={24} aria-label="Groter"><GrowFont /></Tool>
              <Tool $w={22} aria-label="Kleiner"><GrowFont down /></Tool>
            </Row>
            <Row>
              <Tool $w={22}><Glyph $size={14} $bold>B</Glyph></Tool>
              <Tool $w={24}><Glyph $size={14} $bold $italic>I</Glyph></Tool>
              <Tool $w={22}><Glyph $size={14} $bold $under>U</Glyph></Tool>
              <Tool $w={12} aria-label="Onderstrepen opties"><Caret /></Tool><Gap $w={10} />
              <Tool $w={22} aria-label="Randen"><BorderIcon /></Tool><Tool $w={10} aria-label="Randen opties"><Caret /></Tool><Gap $w={12} />
              <Tool $w={22} aria-label="Opvulkleur"><FillIcon /></Tool><Tool $w={10} aria-label="Opvulkleur opties"><Caret /></Tool>
              <Tool $w={24} aria-label="Tekstkleur"><FontColorIcon /></Tool><Tool $w={8} aria-label="Tekstkleur opties"><Caret /></Tool>
            </Row>
          </Stack>
        </Group>
        <Group name="Uitlijning" w={317} launcher>
          <Stack $gap={7}>
            <Row>
              <Tool $w={23} aria-label="Boven"><Lines rows={[[1, 0, 14], [3, 2, 12], [5, 0, 14], [7, 2, 12]]} /></Tool>
              <Tool $w={23} aria-label="Midden"><Lines rows={[[5, 0, 14], [7, 2, 12], [9, 0, 14], [11, 2, 12]]} /></Tool>
              <Tool $w={23} $on aria-label="Onder"><Lines rows={[[8, 0, 14], [10, 2, 12], [12, 0, 14], [14, 2, 12]]} /></Tool>
              <Gap $w={10} /><Tool $w={22} aria-label="Afdrukstand"><OrientIcon /></Tool><Tool $w={8} aria-label="Afdrukstand opties"><Caret /></Tool>
            </Row>
            <Row>
              <Tool $w={23} aria-label="Links"><Lines rows={[[2, 0, 14], [4, 0, 9], [6, 0, 14], [8, 0, 9], [10, 0, 14], [12, 0, 9]]} /></Tool>
              <Tool $w={23} aria-label="Centreren"><Lines rows={[[2, 0, 14], [4, 3, 11], [6, 0, 14], [8, 3, 11], [10, 0, 14], [12, 3, 11]]} /></Tool>
              <Tool $w={23} aria-label="Rechts"><Lines rows={[[2, 0, 14], [4, 5, 14], [6, 0, 14], [8, 5, 14], [10, 0, 14], [12, 5, 14]]} /></Tool>
              <Gap $w={10} /><Tool $w={22} aria-label="Minder inspringen"><IndentIcon out /></Tool><Tool $w={22} aria-label="Meer inspringen"><IndentIcon /></Tool>
            </Row>
          </Stack>
          <Gap $w={12} $h={52} />
          <Stack $gap={7}>
            <LabelTool><WrapIcon />Tekstterugloop</LabelTool>
            <LabelTool><MergeIcon />Samenvoegen en centreren<Caret /></LabelTool>
          </Stack>
        </Group>
        <Group name="Getal" w={143} launcher>
          <Stack $gap={7}>
            <Row><Pick $w={134}><select aria-label="Getalnotatie"><option>Standaard</option></select><Caret /></Pick></Row>
            <Row>
              <Tool $w={24} aria-label="Valuta"><MoneyIcon /></Tool><Tool $w={8} aria-label="Valuta opties"><Caret /></Tool>
              <Tool $w={26}>%</Tool><Tool $w={22}>000</Tool><Gap $w={8} />
              <Tool $w={24} aria-label="Meer decimalen"><DecimalIcon /></Tool><Tool $w={22} aria-label="Minder decimalen"><DecimalIcon less /></Tool>
            </Row>
          </Stack>
        </Group>
        <Group name="Stijlen" w={206} top={3} left={3}>
          <BigTool $w={92}><CondIcon /><span>Voorwaardelijke</span><span>opmaak <Caret /></span></BigTool>
          <BigTool $w={53}><FormatTableIcon /><span>Opmaken</span><span>als tabel <Caret /></span></BigTool>
          <BigTool $w={54}><CellStyleIcon /><span>Celstijlen</span><span><Caret /></span></BigTool>
        </Group>
        <Group name="Cellen" w={107} top={2} left={8}>
          <Stack>
            <LabelTool><CellsIcon kind="add" />Invoegen<Caret /></LabelTool>
            <LabelTool><CellsIcon kind="del" />Verwijderen<Caret /></LabelTool>
            <LabelTool><CellsIcon kind="fmt" />Opmaak<Caret /></LabelTool>
          </Stack>
        </Group>
        <Group name="Bewerken" w={171} top={3}>
          <Stack>
            <Row><Tool $w={22}><Glyph $size={15} $bold>Σ</Glyph></Tool><Tool $w={8} aria-label="Som opties"><Caret /></Tool></Row>
            <Row><Tool $w={22} aria-label="Doorvoeren"><FillDownIcon /></Tool><Tool $w={8} aria-label="Doorvoeren opties"><Caret /></Tool></Row>
            <Row><Tool $w={22} aria-label="Wissen"><EraserIcon /></Tool><Tool $w={8} aria-label="Wissen opties"><Caret /></Tool></Row>
          </Stack>
          <SortTool $w={68}><SortIcon /><span>Sorteren en</span><span>filteren <Caret /></span></SortTool>
          <BigTool $w={62}><FindIcon /><span>Zoeken en</span><span>selecteren <Caret /></span></BigTool>
        </Group>
      </Ribbon>

      <FormulaBar>
        <NameBox><input aria-label="Naamvak" defaultValue="A1" /><Caret color="#222" /></NameBox>
        <FxBox><Dot /><Glyph $size={14} $italic $bold>fx</Glyph></FxBox>
        <FormulaInput aria-label="Formulebalk" />
        <Expand aria-label="Formulebalk uitvouwen"><svg width="8" height="7" viewBox="0 0 8 7" fill="none" stroke="#4a4f5a" strokeWidth="2"><path d="M0.500 1.500l3.500 3.500 3.500-3.500" /></svg></Expand>
      </FormulaBar>

      <SheetArea>
        <GridPane><Sheet /></GridPane>
        <VScroll>
          <SplitBox />
          <ScrollArrow $v aria-label="Omhoog"><Tri dir="u" /></ScrollArrow>
          <VThumb><Grip up /></VThumb>
          <Spacer />
          <ScrollArrow $v aria-label="Omlaag"><Tri dir="d" /></ScrollArrow>
        </VScroll>
        <Frame />
      </SheetArea>

      <SheetBar>
        <SheetNav>
          <SheetNavButton aria-label="Eerste blad"><Tri dir="l" bar /></SheetNavButton>
          <SheetNavButton aria-label="Vorig blad"><Tri dir="l" /></SheetNavButton>
          <SheetNavButton aria-label="Volgend blad"><Tri dir="r" /></SheetNavButton>
          <SheetNavButton aria-label="Laatste blad"><Tri dir="r" bar /></SheetNavButton>
        </SheetNav>
        <SheetTab $w={96} $z={2}>Opmerkingen</SheetTab>
        <SheetTab $w={57} $z={0}>Invoer</SheetTab>
        <SheetTab $w={128} $z={1} $on>Budgetberekening</SheetTab>
        <SheetTab $w={30} $z={0} aria-label="Werkblad invoegen">
          <svg width="16" height="14" viewBox="0 0 16 14"><path d="M4.500 3.500h10v6l-3 3h-7z" fill="#e9eff8" stroke="#5e7399" /><path d="M14.500 9.500h-3v3" fill="#8fa3c6" stroke="#5e7399" /><path d="M4 0v8M0 4h8M1 1l6 6M7 1L1 7" stroke="#e09a2f" /><circle cx="4" cy="4" r="1.500" fill="#fff3c4" /></svg>
        </SheetTab>
        <Spacer />
        <HScroll>
          <SplitBox $v />
          <ScrollArrow aria-label="Naar links"><Tri dir="l" /></ScrollArrow>
          <HThumb><Grip /></HThumb>
          <ScrollArrow aria-label="Naar rechts"><Tri dir="r" /></ScrollArrow>
          <SplitBox $v />
        </HScroll>
        <Gap $w={20} $h={0} />
      </SheetBar>

      <StatusBar>
        <StatusText>Klaar.</StatusText>
        <StatusTail>
          <ViewTools>
            <ViewButton $on aria-label="Normaal"><svg width="13" height="11" viewBox="0 0 13 11" fill="#fff" stroke="#4a4f5a"><rect x="0.500" y="0.500" width="12" height="10" /><path d="M0 3.500h13M0 6.500h13M4.500 0v11M8.500 0v11" /></svg></ViewButton>
            <ViewButton aria-label="Pagina-indeling weergave"><svg width="14" height="12" viewBox="0 0 14 12" fill="#9a9ea6" stroke="#4a4f5a"><rect x="0.500" y="0.500" width="13" height="11" /><rect x="3.500" y="2.500" width="7" height="7" fill="#fff" /><path d="M5 4.500h4M5 6.500h4" /></svg></ViewButton>
            <ViewButton aria-label="Pagina-eindevoorbeeld"><svg width="14" height="12" viewBox="0 0 14 12" fill="#9a9ea6" stroke="#4a4f5a"><rect x="0.500" y="0.500" width="13" height="11" /><path d="M1 1h4v6H1zM5.500 0.500h3v6h-3z" fill="#fff" /></svg></ViewButton>
            <Percent>85%</Percent>
            <Round aria-label="Uitzoomen"><svg width="8" height="8" viewBox="0 0 8 8"><path d="M0 4h8" stroke="#333" strokeWidth="2" /></svg></Round>
            <Zoom type="range" min={0} max={100} defaultValue={42} aria-label="In- en uitzoomen" />
            <Round aria-label="Inzoomen"><svg width="8" height="8" viewBox="0 0 8 8"><path d="M0 4h8M4 0v8" stroke="#333" strokeWidth="2" /></svg></Round>
            <Gap $w={4} $h={0} />
          </ViewTools>
        </StatusTail>
      </StatusBar>
    </Window>
  );
}

const SortTool = styled(BigTool)`
  && svg:first-child { margin-bottom: 1px; }
  && span svg:first-child { margin-bottom: 0; }
`;
